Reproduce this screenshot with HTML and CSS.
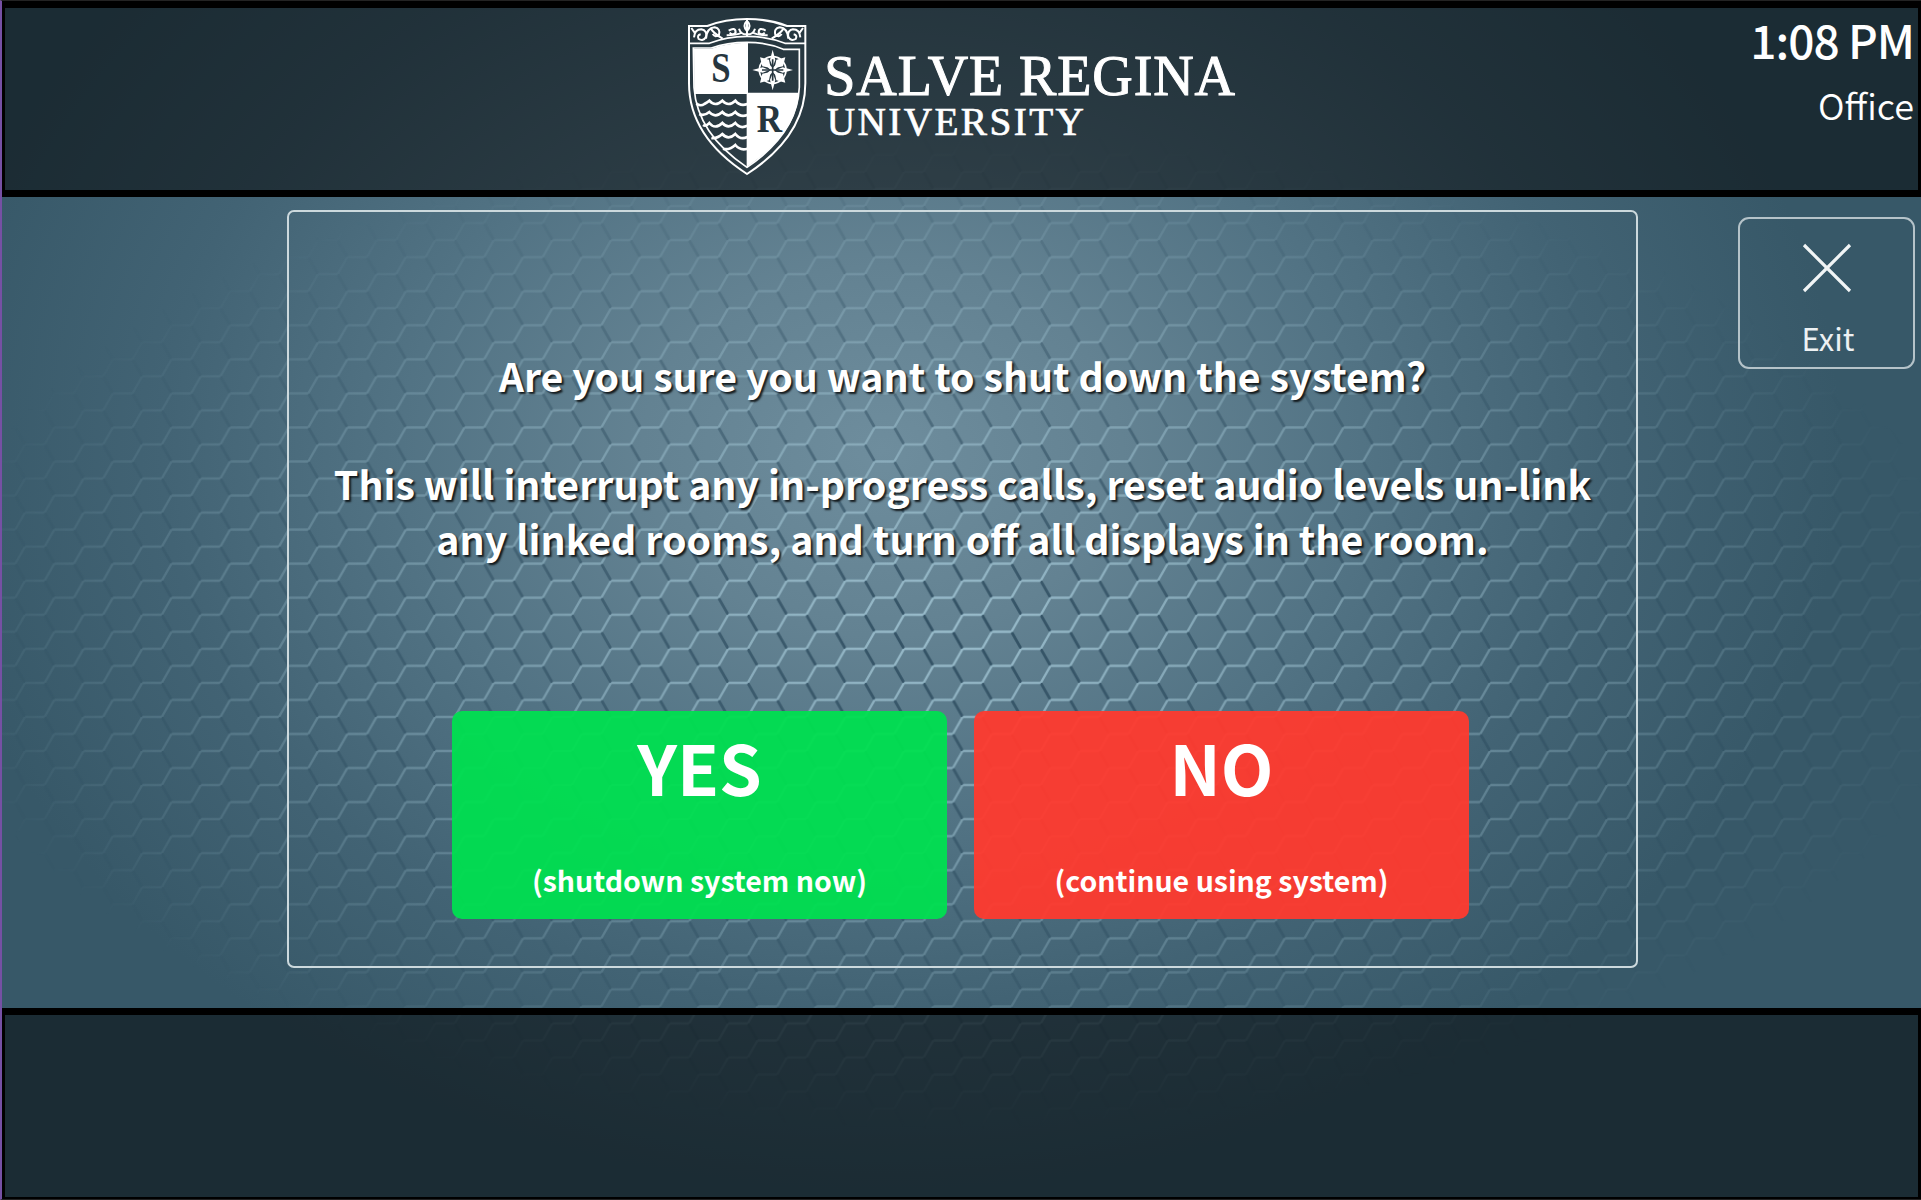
FILE: index.html
```html
<!DOCTYPE html>
<html lang="en">
<head>
<meta charset="utf-8">
<title>Shut down system</title>
<link rel="stylesheet" href="styles.css">
</head>
<body>
<div class="screen">
  <svg class="backdrop" width="1921" height="1200" aria-hidden="true">
    <defs>
      <pattern id="hex" width="58.6" height="34.06" patternUnits="userSpaceOnUse" patternTransform="translate(855.2 580.7)">
        <g fill="none" stroke-width="2.8">
          <path stroke="#1d3c50" stroke-opacity=".75" d="M9.75 0L19.5 17.03M39.1 17.03L48.85 34.06"/>
          <path stroke="#abd0de" stroke-opacity=".8" stroke-width="2.4" d="M-1 0H9.75M48.85 0H59.6M-1 34.06H9.75M48.85 34.06H59.6M19.5 17.03H39.1M9.75 34.06L19.5 17.03M39.1 17.03L48.85 0"/>
        </g>
      </pattern>
      <radialGradient id="fade" gradientUnits="userSpaceOnUse" cx="0" cy="0" r="1" gradientTransform="translate(950 630) scale(1030 500)">
        <stop offset="0" stop-color="#fff" stop-opacity=".95"/>
        <stop offset=".3" stop-color="#fff" stop-opacity=".62"/>
        <stop offset=".6" stop-color="#fff" stop-opacity=".38"/>
        <stop offset="1" stop-color="#fff" stop-opacity="0"/>
      </radialGradient>
      <mask id="glow" maskUnits="userSpaceOnUse" x="0" y="0" width="1921" height="1200"><rect width="1921" height="1200" fill="url(#fade)"/></mask>
    </defs>
    <rect width="1921" height="1200" fill="url(#hex)" mask="url(#glow)"/>
  </svg>

  <header class="bar header">
    <svg class="logo" viewBox="0 0 1710 540" role="img" aria-label="Salve Regina University">
      <g transform="translate(0 -24)">
      <g fill="none" stroke="#fff" stroke-width="6">
        <path d="M57 78H112Q165 57 231 57T351 78H406V250C406 360 342 450 231 522C120 450 57 360 57 250Z"/>
        <path stroke-width="5" d="M58 130H118Q170 109 231 109T345 130H405"/>
        <path stroke-width="5" d="M70 144H124Q170 127 231 127T340 148H388V262C384 352 332 434 231 502C130 434 78 352 72 262Z"/>
        <g id="scroll" stroke-width="6">
          <path d="M64 84L74 98M72 112Q74 88 94 88Q112 92 108 110Q100 125 86 117Q80 106 92 103M108 116Q110 84 134 82Q152 86 147 104Q136 114 128 102M122 84Q128 98 158 116M176 92Q196 80 197 97Q188 108 179 98M170 106Q198 106 216 98"/>
        </g>
        <use href="#scroll" transform="matrix(-1 0 0 1 463 0)"/>
        <path d="M231 60V109M231 62Q216 78 231 93Q246 78 231 62M207 86Q212 103 229 103M255 86Q250 103 233 103"/>
      </g>
      <path fill="#fff" d="M72 146H124Q170 129 231 128V280H73ZM233 281H387C380 362 330 432 233 499Z"/>
      <g fill="none" stroke="#fff" stroke-width="8">
        <path stroke-width="4" d="M232 128V502M73 280H387"/>
        <path d="M79 311Q92 320 103 312Q112 307 118 302Q135 322 157 302Q175 322 196 302Q211 321 232 312"/>
        <path d="M88 342Q101 350 118 336Q135 356 157 336Q175 356 196 336Q211 353 232 345"/>
        <path d="M99 375Q108 381 118 369Q135 390 157 369Q175 389 196 369Q211 388 232 377"/>
        <path d="M124 414Q140 417 157 402Q175 422 196 402Q211 421 232 411"/>
        <path d="M159 446Q176 452 196 435Q211 453 232 446"/>
        <circle cx="308" cy="210" r="40" stroke-width="5"/>
        <path stroke-width="9" d="M279 181L337 239M337 181L279 239"/>
      </g>
      <path fill="#fff" d="M308 149L316 180L308 200L300 180ZM308 271L316 240L308 220L300 240ZM247 210L278 202L298 210L278 218ZM369 210L338 202L318 210L338 218Z"/>
      <path fill="#fff" d="M270 172L297 179L302 204L277 199ZM346 172L319 179L314 204L339 199ZM270 248L297 241L302 216L277 221ZM346 248L319 241L314 216L339 221Z"/>
      <path stroke="#26363f" stroke-width="5" d="M308 178V242M276 210H340"/>
      <g class="crest-letter"><text x="124" y="246" textLength="58" lengthAdjust="spacingAndGlyphs" font-size="124">S</text><text x="260" y="396" textLength="76" lengthAdjust="spacingAndGlyphs" font-size="121">R</text></g>
      <g class="wordmark"><text x="463" y="286" font-size="168" textLength="1232" stroke-width="3">SALVE REGINA</text><text x="470" y="405" font-size="118" textLength="772" stroke-width="2">UNIVERSITY</text></g>
      </g>
    </svg>
    <div class="status">
      <div class="time">1:08 PM</div>
      <div class="room">Office</div>
    </div>
  </header>

  <main class="content">
    <section class="dialog">
      <div class="message">
        <p>Are you sure you want to shut down the system?</p>
        <p>This will interrupt any in-progress calls, reset audio levels un-link<br>any linked rooms, and turn off all displays in the room.</p>
      </div>
      <div class="choices">
        <button class="choice yes"><span class="answer">YES</span><span class="hint">(shutdown system now)</span></button>
        <button class="choice no"><span class="answer">NO</span><span class="hint">(continue using system)</span></button>
      </div>
    </section>
    <button class="exit">
      <svg width="50" height="50" viewBox="0 0 50 50"><path d="M2 2L48 48M48 2L2 48" fill="none" stroke="#f1f5f6" stroke-width="3.2"/></svg>
      <span>Exit</span>
    </button>
  </main>

  <footer class="bar footer"></footer>
</div>
</body>
</html>
```
FILE: styles.css
```css
* { box-sizing: border-box; }

body {
  margin: 0;
  background: #222;
  font-family: "Noto Sans CJK SC", "Noto Sans", sans-serif;
  color: #fff;
}

.screen {
  position: relative;
  width: 1921px;
  height: 1200px;
  border: 1px solid #232323;
  border-width: 1px 0;
  border-left: 2px solid #7650a4;
  display: flex;
  flex-direction: column;
  overflow: hidden;
  background: radial-gradient(960px 740px at 880px 450px, #6e8d9d 0%, #638292 25%, #527384 50%, #426374 75%, #375868 100%);
}

.backdrop { position: absolute; top: -1px; left: -2px; }

.bar {
  position: relative;
  border: 7px solid #000;
  border-width: 7px 3px 7px 3px;
  background: rgba(0, 0, 0, .5);
}

.header {
  height: 196px;
  display: flex;
  justify-content: space-between;
  padding-left: 665px;
}

.logo { width: 570px; height: 180px; }
.crest-letter { font-family: "Liberation Serif", serif; font-weight: bold; fill: #26363f; }
.wordmark { font-family: "Liberation Serif", serif; fill: #fff; stroke: #fff; }

.status { text-align: right; padding: 2px 4px 0 0; }
.time { font-size: 46px; font-weight: 500; line-height: 58px; letter-spacing: -1px; }
.room { font-size: 36px; font-weight: 350; line-height: 54px; margin-top: 9px; }

.content {
  position: relative;
  flex: 1;
  display: flex;
  justify-content: space-between;
  align-items: flex-start;
  padding: 13px 6px 0 285px;
}

.dialog {
  width: 1351px;
  height: 758px;
  border: 2px solid #ccd9dd;
  border-radius: 7px;
  padding: 135px 0 0;
  display: flex;
  flex-direction: column;
  align-items: center;
}

.message {
  height: 364px;
  text-align: center;
  font-size: 39.3px;
  font-weight: 700;
  line-height: 55px;
  white-space: nowrap;
  text-shadow: 2px 2px 2px rgba(0, 0, 0, .8);
}
.message p { margin: 0 0 53px; }

.choices { display: flex; gap: 27px; padding-right: 4px; }

.choice {
  width: 495px;
  height: 208px;
  border: 0;
  border-radius: 10px;
  padding: 6px 0 0;
  display: flex;
  flex-direction: column;
  align-items: center;
  font: inherit;
  font-weight: 700;
  color: #fff;
}
.yes { background: rgba(0, 223, 80, .95); }
.no { background: rgba(255, 58, 46, .95); }
.answer { font-size: 68.5px; line-height: 100px; }
.hint { font-size: 28.5px; line-height: 44px; margin-top: 41px; }

.exit {
  width: 177px;
  height: 152px;
  margin-top: 7px;
  padding: 24px 0 0 3px;
  border: 2px solid #b5c3c9;
  border-radius: 11px;
  background: none;
  display: flex;
  flex-direction: column;
  align-items: center;
  font: inherit;
  font-size: 31px;
  font-weight: 400;
  line-height: 44px;
  color: #edf1f3;
}
.exit svg { margin-right: 3px; }
.exit span { margin-top: 23px; }

.footer { height: 191px; border-bottom-width: 2px; }
```
